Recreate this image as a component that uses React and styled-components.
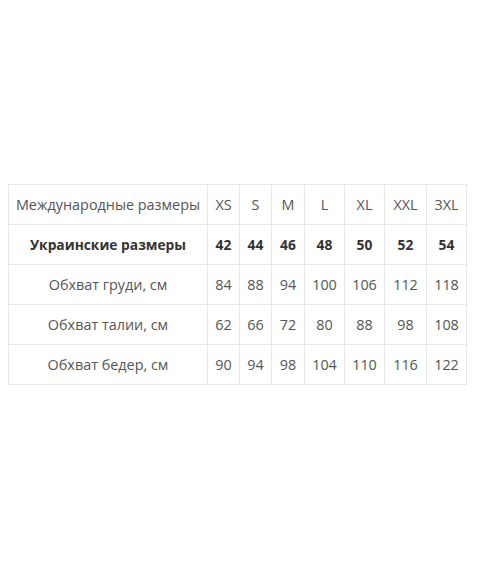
import React from "react";
import styled, { createGlobalStyle } from "styled-components";

const GlobalStyle = createGlobalStyle`
  html, body {
    margin: 0;
    padding: 0;
    background: #fff;
  }
  body {
    font-family: "Open Sans", "Liberation Sans", sans-serif;
  }
`;

const Page = styled.div`
  width: 480px;
  height: 570px;
  padding: 184px 0 0 8px;
  box-sizing: border-box;
`;

const Table = styled.table`
  border-collapse: collapse;
  table-layout: fixed;
  width: 459px;
  color: #555;
  border: 1px solid #e8e8e8;
`;

const Cell = styled.td`
  height: 39px;
  padding: 0;
  text-align: center;
  vertical-align: middle;
  border: 1px solid #e8e8e8;
  white-space: nowrap;
  font-size: ${(p) => (p.$bold ? "13.8px" : "14.4px")};
  font-weight: ${(p) => (p.$bold ? 700 : 400)};
  color: ${(p) => (p.$bold ? "#333" : "#555")};
`;

const widths = [199, 32, 32, 33, 40, 40, 42, 40];

const rows = [
  { label: "Международные размеры", values: ["XS", "S", "M", "L", "XL", "XXL", "3XL"] },
  { label: "Украинские размеры", values: ["42", "44", "46", "48", "50", "52", "54"], bold: true },
  { label: "Обхват груди, см", values: ["84", "88", "94", "100", "106", "112", "118"] },
  { label: "Обхват талии, см", values: ["62", "66", "72", "80", "88", "98", "108"] },
  { label: "Обхват бедер, см", values: ["90", "94", "98", "104", "110", "116", "122"] },
];

export default function App() {
  return (
    <>
      <GlobalStyle />
      <Page>
        <Table>
          <colgroup>
            {widths.map((w, i) => (
              <col key={i} style={{ width: w }} />
            ))}
          </colgroup>
          <tbody>
            {rows.map((r) => (
              <tr key={r.label}>
                <Cell $bold={r.bold}>{r.label}</Cell>
                {r.values.map((v) => (
                  <Cell key={v} $bold={r.bold}>
                    {v}
                  </Cell>
                ))}
              </tr>
            ))}
          </tbody>
        </Table>
      </Page>
    </>
  );
}
